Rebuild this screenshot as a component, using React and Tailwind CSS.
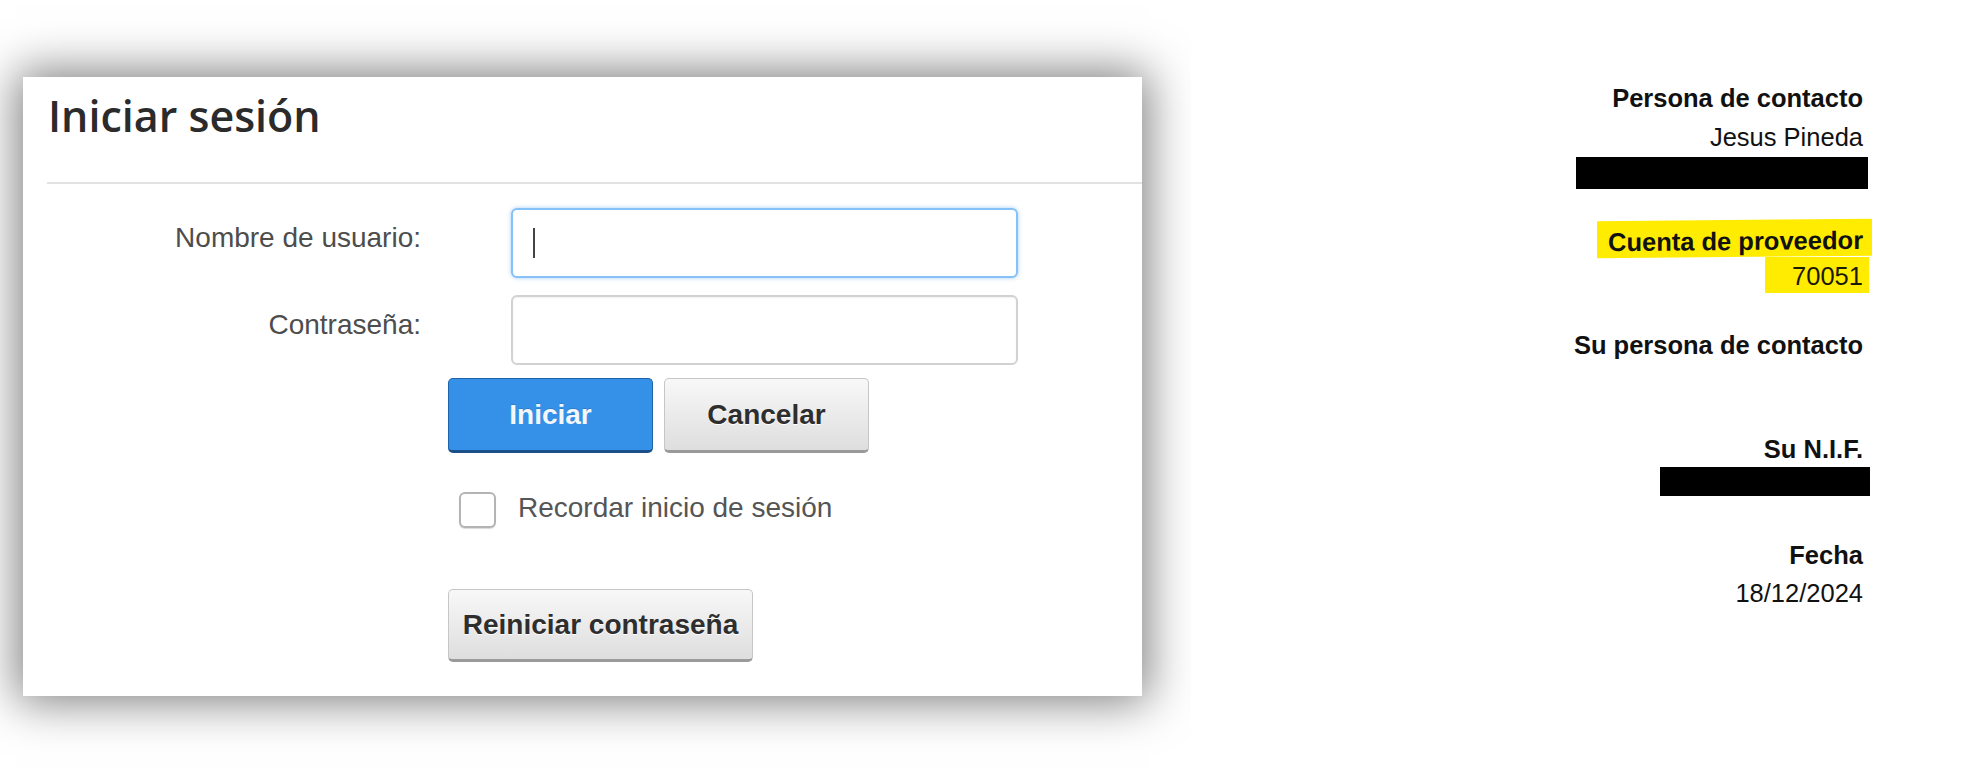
const sans = { fontFamily: '"Liberation Sans", Arial, sans-serif' }

const LoginPanel = () => (
  <div className="h-[775px] w-[1191px] shrink-0 overflow-hidden pl-[23px] pt-[77px]">
    <div className="h-[619px] w-[1119px] bg-white pt-[14px] shadow-[0_0_44px_6px_rgba(0,0,0,0.5)]">
      <h1 className="pl-[25px] font-['Open_Sans',sans-serif] text-[43px] font-semibold leading-[50px] text-[#2b2b2b]">
        Iniciar sesión
      </h1>
      <div className="ml-[24px] mt-[41px] h-[2px] bg-[#e2e2e2]" />

      <div className="mt-[24px] flex flex-col gap-[17px] text-[28px] leading-[28px]" style={sans}>
        <div className="flex gap-[90px]">
          <label className="w-[398px] pt-[16px] text-right text-[#4d4d4d]">Nombre de usuario:</label>
          <div className="flex h-[70px] w-[507px] items-center rounded-[6px] border-2 border-[#86c1f7] bg-white pl-[20px] shadow-[0_0_4px_rgba(80,160,240,0.5)]">
            <span className="h-[30px] w-[2px] bg-[#444]" />
          </div>
        </div>
        <div className="flex gap-[90px]">
          <label className="w-[398px] pt-[16px] text-right text-[#4d4d4d]">Contraseña:</label>
          <div className="h-[70px] w-[507px] rounded-[6px] border-2 border-[#d2d2d2] bg-white shadow-[inset_0_1px_2px_rgba(0,0,0,0.06)]" />
        </div>
      </div>

      <div className="ml-[425px] mt-[13px] flex gap-[11px] text-[28px] font-bold" style={sans}>
        <button className="h-[75px] w-[205px] rounded-[5px] border border-b-[3px] border-[#2163aa] border-b-[#1b4f8a] bg-[#3590e8] text-[#f3f7fb] [text-shadow:0_-1px_0_rgba(0,0,0,0.15)]">
          Iniciar
        </button>
        <button className="h-[75px] w-[205px] rounded-[5px] border border-b-[3px] border-[#c6c6c6] border-b-[#9a9a9a] bg-linear-to-b from-[#f8f8f8] to-[#dedede] text-[#2e2e2e] [text-shadow:0_1px_0_#fff]">
          Cancelar
        </button>
      </div>

      <div className="ml-[436px] mt-[39px] flex items-start gap-[22px] text-[28px] leading-[28px]" style={sans}>
        <span className="h-[36px] w-[37px] rounded-[6px] border-2 border-[#b4b4b4] bg-white shadow-[0_1px_1px_rgba(0,0,0,0.15)]" />
        <span className="pt-[2px] text-[#555]">Recordar inicio de sesión</span>
      </div>

      <div className="ml-[425px] mt-[61px]" style={sans}>
        <button className="h-[73px] w-[305px] rounded-[5px] border border-b-[3px] border-[#c6c6c6] border-b-[#9a9a9a] bg-linear-to-b from-[#f8f8f8] to-[#dedede] text-[28px] font-bold text-[#2e2e2e] [text-shadow:0_1px_0_#fff]">
          Reiniciar contraseña
        </button>
      </div>
    </div>
  </div>
)

const ContactInfo = () => (
  <div className="flex flex-1 flex-col items-end pr-[115px] pt-[79px] text-[25.5px] text-[#111]" style={sans}>
    <p className="font-bold leading-[39px]">Persona de contacto</p>
    <p className="leading-[39px]">Jesus Pineda</p>
    <div className="-mr-[5px] h-[32px] w-[292px] bg-black" />

    <div className="-mr-[9px] mt-[31px] -skew-y-[0.5deg] bg-[#ffec00] pl-[11px] pr-[9px] pt-[5px] leading-[32px]">
      <p className="font-bold">Cuenta de proveedor</p>
    </div>
    <div className="-mr-[6px] bg-[#ffec00] pb-[1px] pl-[27px] pr-[6px] pt-[3px] leading-[32px]">
      <p className="text-[#1a1a05]">70051</p>
    </div>

    <p className="mt-[34px] font-bold leading-[36px]">Su persona de contacto</p>
    <p className="mt-[68px] font-bold leading-[36px]">Su N.I.F.</p>
    <div className="-mr-[7px] h-[29px] w-[210px] bg-black" />

    <p className="mt-[41px] font-bold leading-[36px]">Fecha</p>
    <p className="mt-[2px] leading-[36px]">18/12/2024</p>
  </div>
)

export default function App() {
  return (
    <div className="flex h-[775px] w-[1978px] overflow-hidden bg-white">
      <LoginPanel />
      <ContactInfo />
    </div>
  )
}
